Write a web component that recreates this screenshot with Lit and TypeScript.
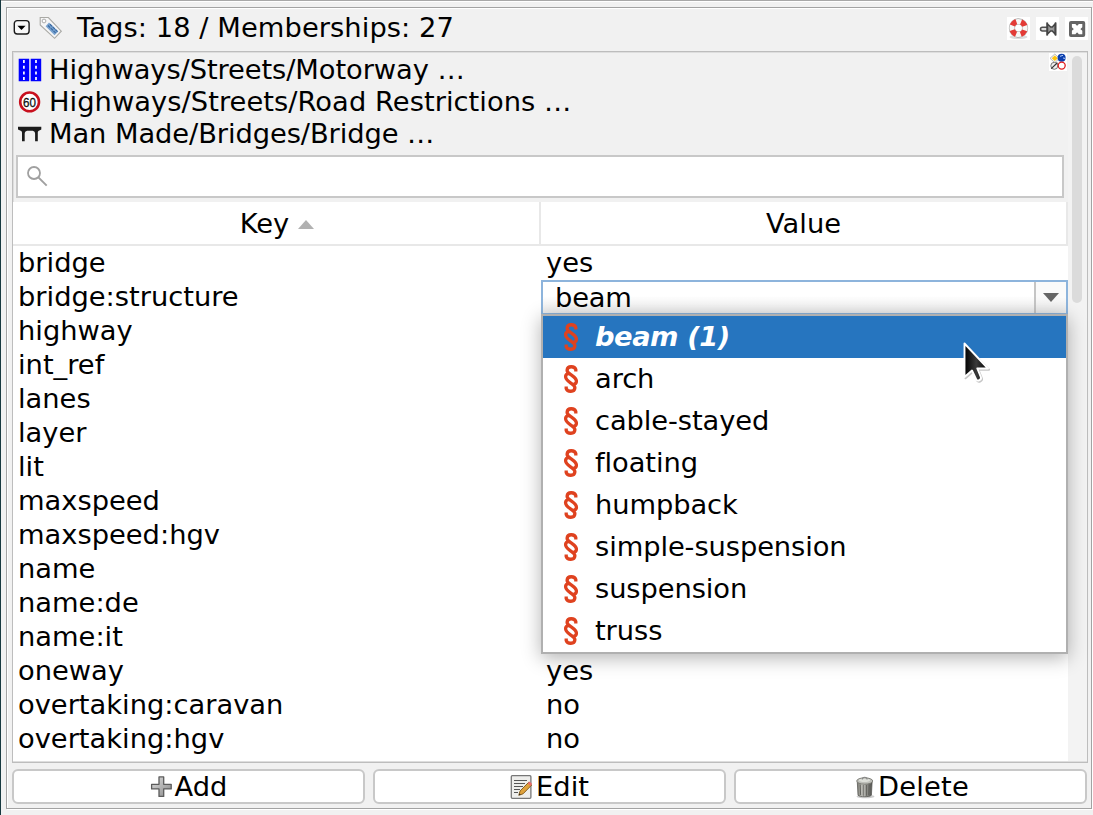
import { LitElement, html, css, svg } from "lit";
import { customElement } from "lit/decorators.js";

const rows: [string, string][] = [
  ["bridge", "yes"],
  ["bridge:structure", "beam"],
  ["highway", ""],
  ["int_ref", ""],
  ["lanes", ""],
  ["layer", ""],
  ["lit", ""],
  ["maxspeed", ""],
  ["maxspeed:hgv", ""],
  ["name", ""],
  ["name:de", ""],
  ["name:it", ""],
  ["oneway", "yes"],
  ["overtaking:caravan", "no"],
  ["overtaking:hgv", "no"],
];

const options = ["beam (1)", "arch", "cable-stayed", "floating", "humpback", "simple-suspension", "suspension", "truss"];

const icon = (w: number, h: number, body: unknown, cls = "") =>
  html`<svg class=${cls} width=${w} height=${h} viewBox="0 0 ${w} ${h}">${body}</svg>`;

const collapse = icon(17, 17, svg`
  <rect x="1.300" y="1.600" width="14.800" height="13.400" rx="3" fill="#f8f8f8" stroke="#1a1a1a" stroke-width="1.4"/>
  <path d="M4.400 6.800h8.2L8.500 11z" fill="#000"/>`);

const tag = icon(24, 24, svg`
  <path d="M1.2 1.5h8.2L22.3 15.2 15.6 22.3 1.2 9z" fill="#f6f6f6" stroke="#a9a9a5" stroke-width="1.1"/>
  <circle cx="5" cy="5" r="1.9" fill="#fff" stroke="#aaa" stroke-width="1"/>
  <path d="M10 6.5L19.3 15.6 15.5 19.2 6.6 10.3z" fill="#7aa3cf"/>
  <path d="M9 9.5l8 7.8M11 8.2l7.5 7.4" stroke="#3869a2" stroke-width="1.2" stroke-dasharray="3 .8"/>`);

const lifebuoy = icon(23, 23, svg`
  <rect width="23" height="23" fill="#fff"/>
  <ellipse cx="11.5" cy="20" rx="9" ry="2" fill="#ddd"/>
  <circle cx="11.5" cy="11" r="6.6" fill="none" stroke="#aaa" stroke-width="6.2"/>
  <circle cx="11.5" cy="11" r="6.6" fill="none" stroke="#f7f7f5" stroke-width="5"/>
  <circle cx="11.5" cy="11" r="6.6" fill="none" stroke="#e33b36" stroke-width="5.4" stroke-dasharray="5.6 4.77" stroke-dashoffset="-2.4"/>`);

const pin = icon(23, 23, svg`
  <rect width="23" height="23" fill="#fff"/>
  <path d="M11 10.2H6.4a1.9 1.9 0 0 0 0 3.8H11" fill="#ddd" stroke="#505050" stroke-width="1.5"/>
  <path d="M11.2 5.5v13M19.6 5.5v13" stroke="#454545" stroke-width="1.8"/>
  <path d="M11.5 7l3.2 3h1.6l2.8-3v10l-2.8-3h-1.6l-3.2 3z" fill="#999" stroke="#454545" stroke-width="1.5"/>`);

const close = icon(23, 23, svg`
  <rect width="23" height="23" fill="#fff"/>
  <rect x="4" y="4" width="16.2" height="16" rx="2" fill="#646464"/>
  <path d="M8.600 8.600l7 6.900M15.600 8.600l-7 6.900" stroke="#fff" stroke-width="4.600"/>
  <path d="M6.900 6.900h3.400v3.400h-3.400zM13.900 6.900h3.400v3.400h-3.400zM6.900 13.800h3.400v3.400h-3.400zM13.900 13.800h3.400v3.400h-3.400z" fill="#fff"/>`);

const presetsIcon = icon(18, 18, svg`
  <rect width="18" height="18" fill="#fff"/>
  <path d="M5.8 1l4.6 4.3-4.6 4.4L1 5.3z" fill="#f5f5f0" stroke="#aaa" stroke-width=".8"/>
  <path d="M5.8 2.500l3 2.8-3 2.800L2.700 5.300z" fill="#ffc40c"/>
  <circle cx="12.6" cy="4.8" r="4" fill="#0b3fae"/>
  <path d="M11 3.3l3-1M14 5l2 .4" stroke="#b9cdf5" stroke-width="1"/>
  <circle cx="5.3" cy="12.8" r="3.5" fill="#eee" stroke="#777" stroke-width="1"/>
  <path d="M2.2 15.6L8.4 9.8" stroke="#333" stroke-width="1.2"/>
  <circle cx="12.7" cy="12.6" r="3.5" fill="#fff" stroke="#e11d1d" stroke-width="1.3"/>`);

const motorway = icon(24, 24, svg`
  <path d="M.7 .7h10.500v22.600H.7zM12.700.7h10.500v22.600H12.700z" fill="#00f"/>
  <path d="M5.900 2v20M18 2v20" stroke="#fff" stroke-width="1.700" stroke-dasharray="3 2.700"/>`);

const speed = icon(24, 24, svg`
  <circle cx="11.6" cy="11.9" r="9.4" fill="#fff" stroke="#c8101e" stroke-width="2.6"/>
  <text x="11.6" y="16.5" text-anchor="middle" textLength="13" lengthAdjust="spacingAndGlyphs"
    font-family="Liberation Sans" font-size="13" fill="#111" stroke="#111" stroke-width=".3">60</text>`);

const bridgeIcon = icon(24, 24, svg`
  <path d="M0 4.800h23.300v2.800l-2.900 1.400c-.5.500-.6 1-.6 2v8.300h-2.700v-7.500c0-1.800-.8-2.700-2.400-3.100h-5.600c-1.600.4-2.400 1.300-2.400 3.100v7.500H4v-8.300c0-1-.2-1.500-.8-2L0 7.600z" fill="#1c1c1c"/>`);

const magnifier = icon(22, 22, svg`
  <circle cx="8" cy="8" r="6" fill="none" stroke="#a0a0a0" stroke-width="1.800"/>
  <path d="M12.400 12.400L20.700 20.600" stroke="#a0a0a0" stroke-width="2"/>`);

const plus = icon(23, 23, svg`
  <defs><linearGradient id="pg" x1="0" y1="0" x2="1" y2="1"><stop offset="0" stop-color="#ddd"/><stop offset="1" stop-color="#888"/></linearGradient></defs>
  <path d="M9 1.900h4.700v7.400h7.500v4.600h-7.500v7.500H9v-7.500H1.600V9.300H9z" fill="url(#pg)" stroke="#5c5c5c" stroke-width="1.300" stroke-linejoin="round"/>`);

const editIcon = icon(24, 26, svg`
  <rect x="1.300" y="1.700" width="19.600" height="22.600" rx="1" fill="#eeeeec" stroke="#777" stroke-width="1.300"/>
  <path d="M4 6.500h13M4 9.500h11M4 12.500h9M4 15.500h6M4 18.500h4" stroke="#555" stroke-width="1"/>
  <path d="M8.800 21.300l1.300-4.400L18.600 8.400l3 2.700-8.500 8.700z" fill="#dfa23c" stroke="#7d5312" stroke-width=".9"/>
  <path d="M17.700 9.200l1.900-1.600 2.500 2.300-1.700 2z" fill="#e86a6a"/>
  <path d="M8.800 21.300l.6-1.900 1.400 1.100z" fill="#222"/>`);

const trash = icon(22, 24, svg`
  <defs><linearGradient id="tg"><stop offset="0" stop-color="#77776f"/><stop offset=".35" stop-color="#c9c9c3"/><stop offset="1" stop-color="#4c4c48"/></linearGradient></defs>
  <ellipse cx="11.500" cy="21.500" rx="9" ry="1.800" fill="#ccc"/>
  <path d="M3.300 7h14.800l-.7 13.200c-1.600 2-11.800 2-13.400 0z" fill="url(#tg)" stroke="#5d5d59" stroke-width=".8"/>
  <path d="M6.200 9.500l.4 10.500M9.200 10v10.800M12.400 10v10.800M15.200 9.500l-.4 10.500" stroke="#5a5a56" stroke-width=".9"/>
  <ellipse cx="10.700" cy="6" rx="8" ry="3.200" fill="#bfc0ba" stroke="#777770" stroke-width=".9"/>
  <ellipse cx="10.500" cy="5.200" rx="5.600" ry="1.700" fill="#dddfd9"/>
  <path d="M8.300 4.500c0-3 4.800-3 4.800 0" fill="none" stroke="#888" stroke-width="1.100"/>`);

const sectionHook = "M11.800 6.600V4.600C10.600 .8 3.500 .6 3.100 5.200c-.1 2.200 1.900 3.300 4.400 5 3.300 2.200 5.200 4 4.900 6.500-.2 1.500-1.300 2.400-3 2.600";
const section = icon(16, 28, svg`
  <g fill="none" stroke="#df421f" stroke-width="3.300"><path d=${sectionHook}/><path d=${sectionHook} transform="rotate(180 7 14)"/></g>`, "section");

@customElement("app-root")
export class AppRoot extends LitElement {
  static styles = css`
    :host {
      display: block;
      width: 1093px;
      height: 815px;
      overflow: hidden;
      font-family: "DejaVu Sans", sans-serif;
      font-size: 27.3px;
      line-height: 34px;
      color: #000;
      white-space: nowrap;
    }
    * { box-sizing: border-box; }
    svg { display: block; flex: none; }
    .window {
      height: 815px;
      border-left: 1px solid #16383f;
      background: #f1f1f1;
      padding: 7px 1px 6px 5px;
      box-shadow: inset 0 1px #a8a8a8, inset 0 2px #fff;
    }
    .panel {
      height: 802px;
      border: 1px solid #a3a3a3;
      box-shadow: inset 1px 1px #fff, 1px 1px #fff;
      display: flex;
      flex-direction: column;
      padding: 0 3px 4px 5px;
    }
    .title { height: 43px; display: flex; align-items: center; padding: 0 0 4px 1px; }
    .title .tag { margin: 1px 0 0 9px; }
    .title .text { flex: 1; margin-left: 14px; letter-spacing: 0.07px; }
    .tools { display: flex; gap: 6px; margin-top: 1px; }
    .pane {
      height: 712px;
      border: 1px solid #bdbdbd;
      box-shadow: inset 0 0 0 1px #dedede;
      display: flex;
      position: relative;
    }
    .content { width: 1055px; height: 710px; }
    .presets { height: 103px; padding: 2px 0 0 5px; line-height: 32px; position: relative; }
    .preset { height: 32px; display: flex; align-items: center; gap: 7px; }
    .preset.tight { letter-spacing: -0.08px; }
    .preset.loose { letter-spacing: 0.05px; }
    .corner { position: absolute; right: 1px; top: 1px; }
    .search {
      width: 1048px;
      height: 43px;
      margin-left: 3px;
      border: 2px solid #c8c8c8;
      background: #fff;
      padding: 8px;
    }
    .table { margin-top: 4px; background: #fff; height: 559px; }
    .head, .row { display: grid; grid-template-columns: 528px 527px; }
    .head { height: 44px; line-height: 43px; border-bottom: 2px solid #e8e8e8; text-align: center; }
    .head .key { display: flex; justify-content: center; align-items: center; gap: 9px; border-right: 2px solid #e8e8e8; padding-left: 2px; }
    .head .value { border-right: 2px solid #e8e8e8; }
    .sort { margin-top: 1px; }
    .row { height: 34px; }
    .row span { padding-left: 5px; }
    .combo {
      height: 35px;
      border: 2px solid #8db4dc;
      display: flex;
      line-height: 32px;
      background: linear-gradient(#fff 45%, #ececec);
    }
    .combo .current { flex: 1; padding-left: 12px; letter-spacing: -0.2px; }
    .combo .drop {
      width: 32px;
      border-left: 2px solid #c5c5c5;
      background: linear-gradient(#fafafa 50%, #e9e9e9);
      display: flex;
      align-items: center;
      justify-content: center;
    }
    .popup {
      position: absolute;
      left: 528px;
      top: 262px;
      width: 527px;
      height: 340px;
      border: 2px solid #b0b0b0;
      background: #fff;
      box-shadow: 0 4px 18px rgba(0, 0, 0, 0.3);
    }
    .option { height: 42px; line-height: 42px; display: flex; align-items: center; padding-left: 21px; gap: 15px; letter-spacing: -0.08px; }
    .option.selected { background: #2675bf; color: #fff; font-weight: bold; font-style: italic; letter-spacing: -0.45px; }
    .section { overflow: visible; }
    .pointer { position: absolute; left: 420px; top: 24px; }
    .track { flex: 1; background: #f3f3f3; padding: 3px 5px 0 4px; margin: 1px 1px 1px 0; }
    .thumb { width: 10px; height: 247px; border-radius: 5px; background: #dbdbdb; }
    .buttons { display: grid; grid-template-columns: repeat(3, 353px); gap: 8px; margin-top: 6px; }
    .button {
      height: 35px;
      border: 2px solid #c8c8c8;
      border-radius: 6px;
      background: #fff;
      display: flex;
      align-items: center;
      justify-content: center;
      gap: 2px;
    }
    .button.wide { letter-spacing: 0.2px; padding-left: 2px; }
  `;

  render() {
    return html`<div class="window"><div class="panel">
      <div class="title">${collapse}<div class="tag">${tag}</div><span class="text">Tags: 18 / Memberships: 27</span><div class="tools">${lifebuoy}${pin}${close}</div></div>
      <div class="pane">
        <div class="content">
          <div class="presets">
            <div class="preset tight">${motorway}<span>Highways/Streets/Motorway …</span></div>
            <div class="preset loose">${speed}<span>Highways/Streets/Road Restrictions …</span></div>
            <div class="preset tight">${bridgeIcon}<span>Man Made/Bridges/Bridge …</span></div>
            <div class="corner">${presetsIcon}</div>
          </div>
          <div class="search">${magnifier}</div>
          <div class="table">
            <div class="head">
              <div class="key"><span>Key</span>${icon(16, 9, svg`<path d="M0 9L8 0l8 9z" fill="#b1b1b1"/>`, "sort")}</div>
              <div class="value">Value</div>
            </div>
            ${rows.map(([key, value]) => html`<div class="row"><span>${key}</span>${key === "bridge:structure"
              ? html`<div class="combo"><div class="current">${value}</div><div class="drop">${icon(16, 9, svg`<path d="M0 0h16L8 9z" fill="#666"/>`)}</div></div>`
              : html`<span>${value}</span>`}</div>`)}
          </div>
        </div>
        <div class="track"><div class="thumb"></div></div>
        <div class="popup">
          ${options.map((o, i) => html`<div class="option ${i === 0 ? "selected" : ""}">${section}<span>${o}</span></div>`)}
          <div class="pointer">${icon(30, 44, svg`
            <defs><linearGradient id="cg" x1="0" y1="0" x2="1" y2="0"><stop offset="0" stop-color="#000"/><stop offset=".5" stop-color="#3a3a3a"/><stop offset="1" stop-color="#000"/></linearGradient></defs>
            <path d="M1.500 3.500V37L9 30.500 13.200 39.500C14.500 41.500 19 39.800 17.800 37L14.300 28.500H25z" transform="translate(1 1.200)" fill="#000" stroke="#000" stroke-width="2" stroke-linejoin="round" opacity=".22"/>
            <path d="M1.500 3.500V37L9 30.500 13.200 39.500C14.500 41.500 19 39.800 17.800 37L14.300 28.500H25z" fill="url(#cg)" stroke="#fff" stroke-width="1.900" stroke-linejoin="round"/>`)}</div>
        </div>
      </div>
      <div class="buttons">
        <div class="button">${plus}<span>Add</span></div>
        <div class="button">${editIcon}<span>Edit</span></div>
        <div class="button wide">${trash}<span>Delete</span></div>
      </div>
    </div></div>`;
  }
}
